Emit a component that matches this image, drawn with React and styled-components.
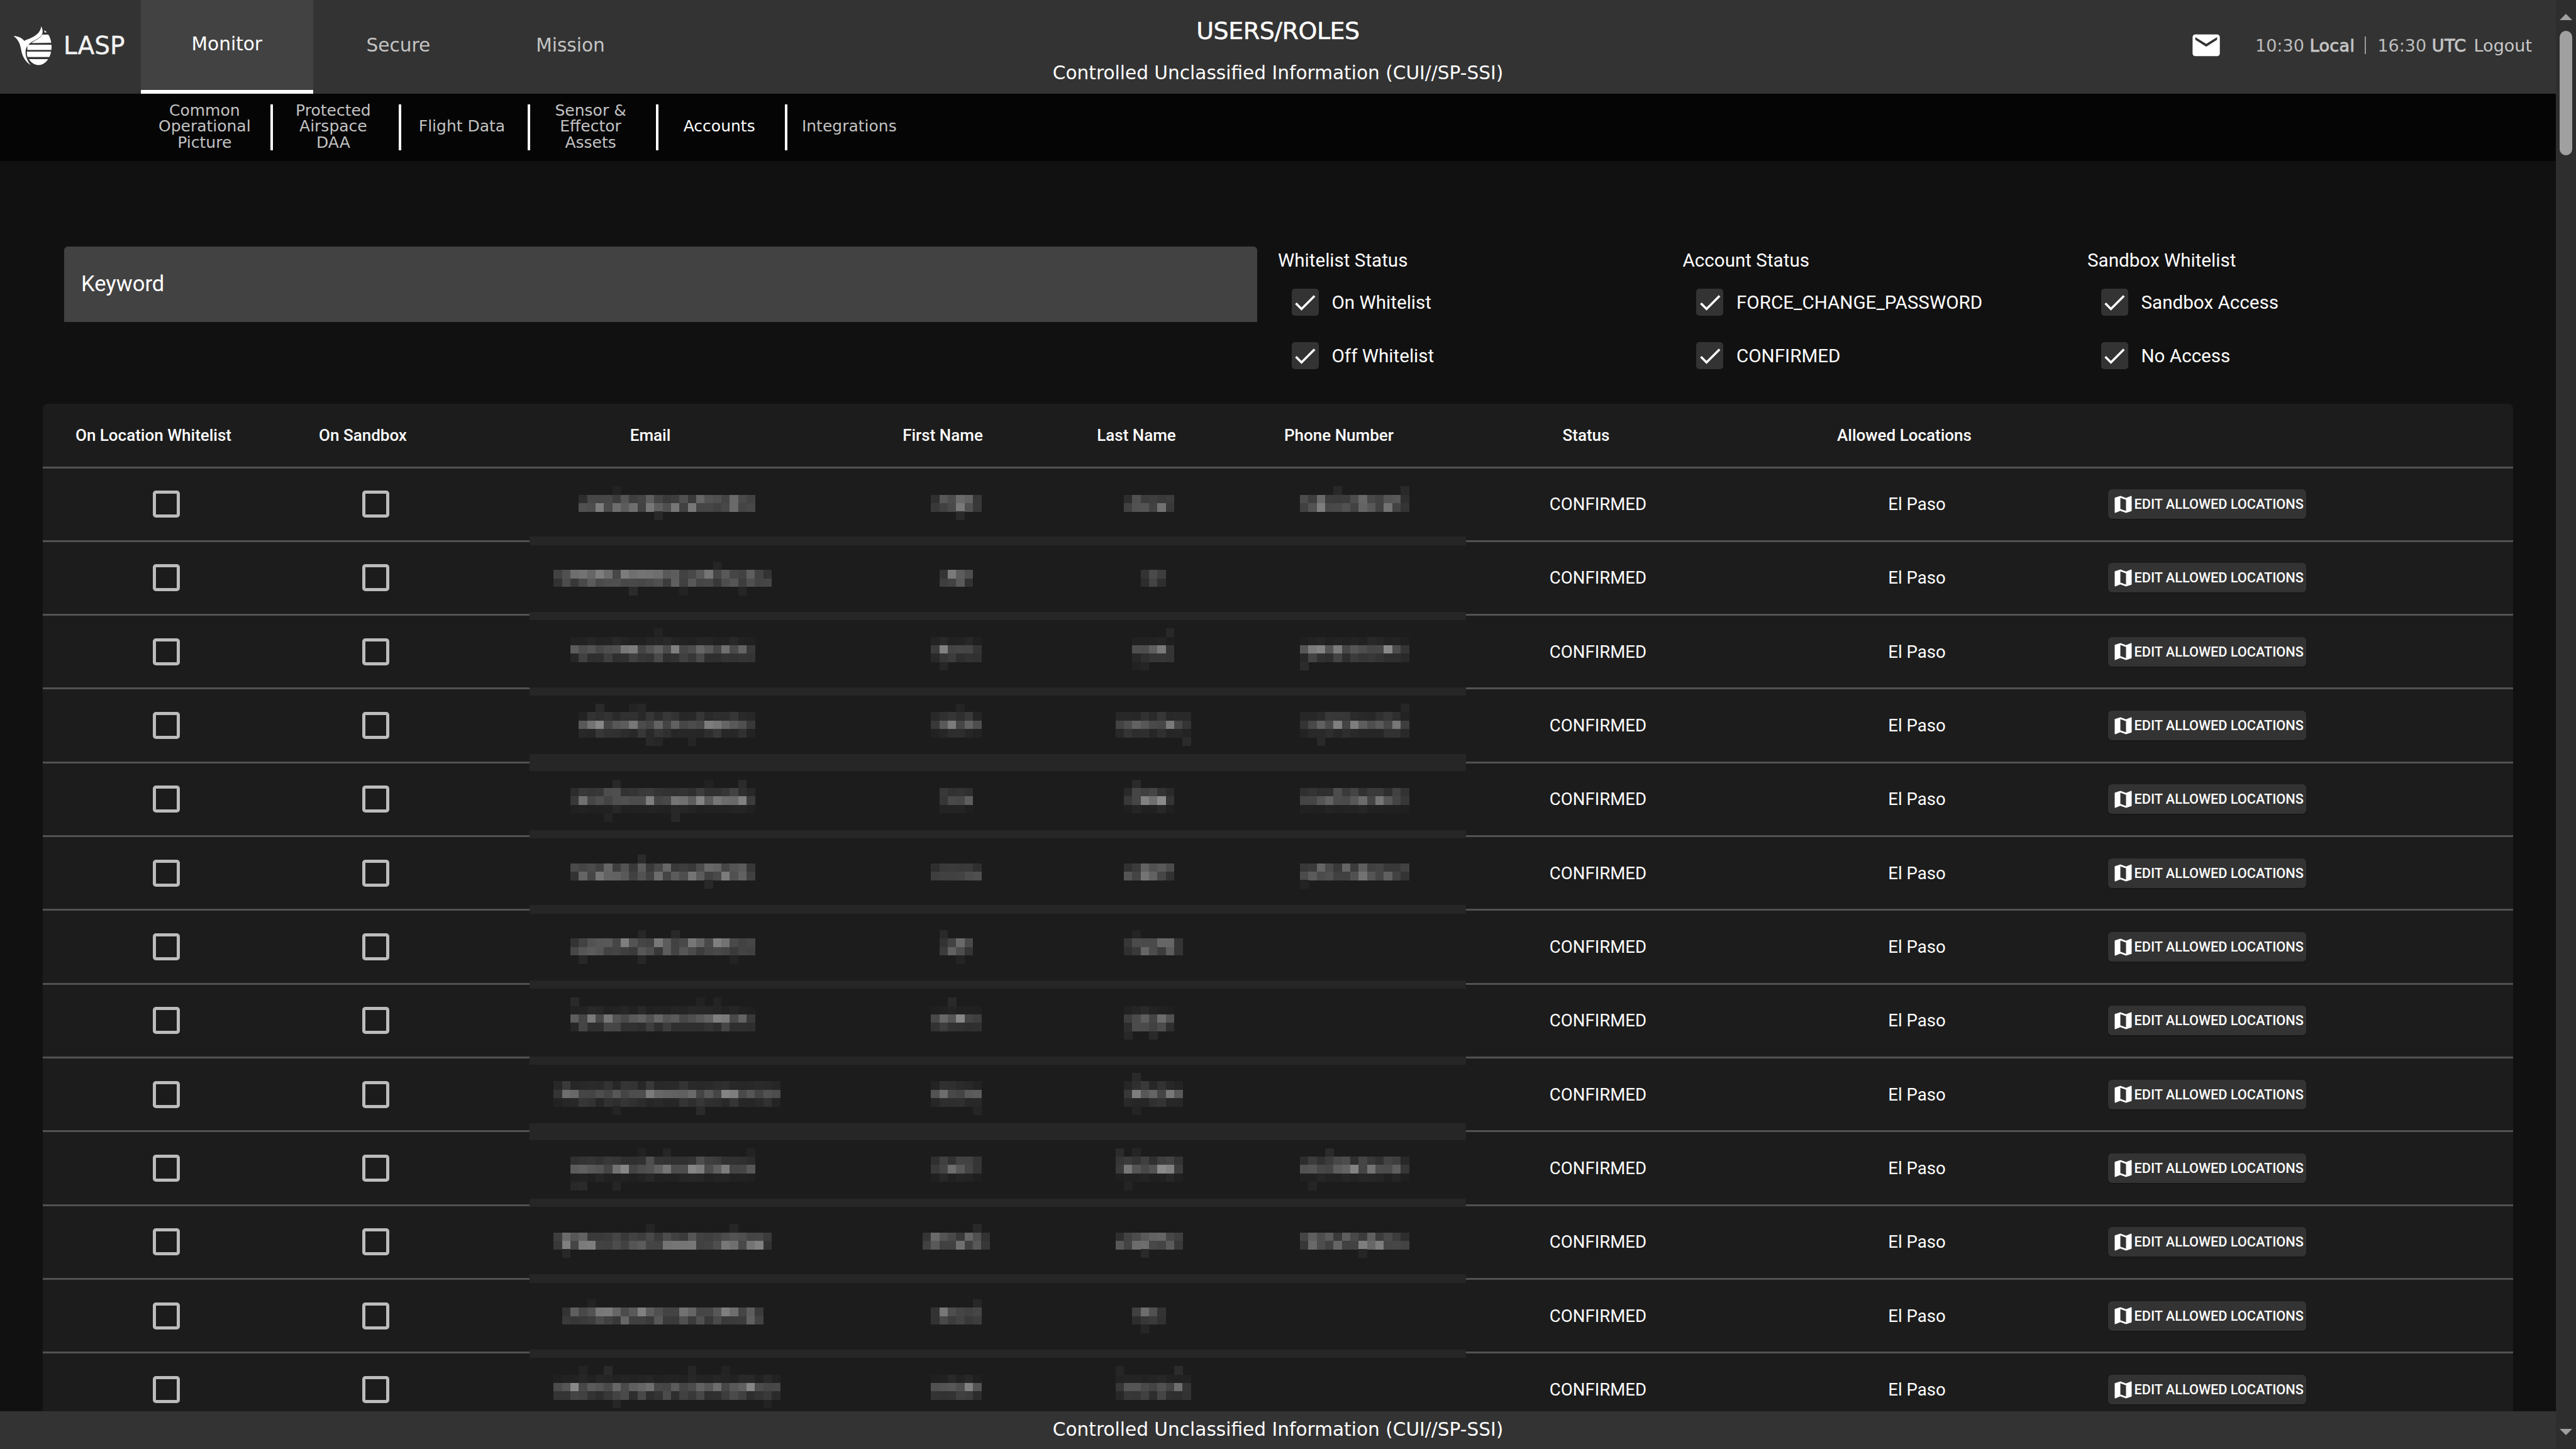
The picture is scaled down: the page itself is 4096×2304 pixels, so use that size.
import React from "react";
import styled, { createGlobalStyle } from "styled-components";

const Global = createGlobalStyle`
  html, body { margin: 0; padding: 0; height: 100%; background: #111; overflow: hidden; }
  #root { height: 100%; }
  * { box-sizing: border-box; }
`;

const Shell = styled.div`display: flex; width: 4096px; height: 2304px; overflow: hidden; background: #111;`;
const Main = styled.div`display: flex; flex-direction: column; width: 4064px; height: 2304px;`;
const Header = styled.header`
  display: grid; grid-template-columns: 1fr auto 1fr; height: 149px; background: #333; flex: none;
  font-family: "DejaVu Sans", sans-serif;
`;
const HeaderLeft = styled.div`display: flex; align-items: stretch;`;
const Brand = styled.div`display: flex; align-items: center; width: 224px; padding: 0 0 4px 21px; gap: 18px; color: #f2f2f2; font-size: 39px; -webkit-text-stroke: 0.4px #f2f2f2;`;
const Logo = styled.svg`width: 62px; height: 63px; flex: none; margin-top: 0;`;
const Tab = styled.div`
  width: 273.6px; display: flex; align-items: center; justify-content: center;
  padding-bottom: ${p => (p.$active ? 4 : 6)}px; padding-right: ${p => (p.$active ? 0 : 2)}px;
  font-size: 29.6px; color: ${p => (p.$active ? "#fff" : "#c4c4c4")};
  background: ${p => (p.$active ? "#424242" : "transparent")};
  border-bottom: ${p => (p.$active ? "6px solid #fff" : "none")};
`;
const TitleStack = styled.div`display: flex; flex-direction: column; align-items: center; color: #fff; padding-top: 26px;`;
const Title = styled.div`font-size: 38px; line-height: 46px; letter-spacing: -0.5px; -webkit-text-stroke: 0.5px #fff;`;
const Cui = styled.div`font-size: 29.6px; line-height: 40px; margin-top: 24px; white-space: nowrap;`;
const HeaderRight = styled.div`display: flex; align-items: center; justify-content: flex-end; padding: 0 38px 5px 0; color: #bdbdbd; font-size: 27px; white-space: nowrap;`;
const MailIcon = styled.svg`width: 52px; height: 52px; fill: #fff; margin-right: 52px; flex: none;`;
const Strong = styled.span`-webkit-text-stroke: 0.9px #c4c4c4; color: #c4c4c4; letter-spacing: 0.4px;`;
const Pipe = styled.span`width: 2px; height: 28px; background: #9a9a9a; margin: 0 18px 0 16px; flex: none;`;
const TimeText = styled.span`display: inline-block;`;
const Logout = styled.span`margin-left: 12px; color: #c8c8c8;`;

const SubNav = styled.nav`
  display: flex; height: 107px; padding: 17px 0 17px 229px; flex: none; background: #050505;
  font-family: "DejaVu Sans", sans-serif;
`;
const SubItem = styled.div`
  width: 204.6px; height: 73px; display: flex; align-items: center; justify-content: center; text-align: center;
  padding: 0 26px 3px 18px;
  font-size: 25px; line-height: 25.6px; color: ${p => (p.$active ? "#fff" : "#c2c2c2")};
  border-right: ${p => (p.$last ? "none" : "4px solid #fff")};
`;

const Content = styled.main`flex: 1; min-height: 0; overflow: hidden; padding-top: 136px; background: #111; font-family: Roboto, sans-serif;`;
const Filters = styled.div`display: flex; padding-left: 102px; height: 250px; gap: 33px; align-items: flex-start;`;
const Keyword = styled.div`
  width: 1897px; height: 120px; background: #424242; border-radius: 6px 6px 0 0; display: flex; align-items: center;
  padding: 0 0 2px 27px; color: #fff; font-size: 34.6px;
`;
const FilterGroup = styled.div`width: 610.5px; color: #fff; font-size: 29.6px;`;
const FilterTitle = styled.div`height: 44px; line-height: 44px;`;
const FilterOption = styled.div`display: flex; align-items: center; height: 43px; margin: 23px 0 42px 21.5px; gap: 21px;`;
const CheckedBox = styled.span`width: 43px; height: 43px; border-radius: 5px; background: #333; display: flex; align-items: center; justify-content: center; flex: none;`;
const CheckIcon = styled.svg`width: 44px; height: 44px; fill: #fff; flex: none;`;

const Table = styled.div`margin: 0 68px; background: #1c1c1c; border-radius: 8px 8px 0 0;`;
const columns = "392px 274px 650px 270px 346px 304px 472px 542px 678px";
const HeadRow = styled.div`
  display: grid; grid-template-columns: ${columns}; height: 102.5px; align-items: center; border-bottom: 3px solid #525252;
`;
const HeadCell = styled.div`text-align: center; padding-right: ${p => p.$pad}px; font-size: 26px; font-weight: 500; color: #fff; white-space: nowrap;`;
const Row = styled.div`
  position: relative; display: grid; grid-template-columns: ${columns}; height: 117.33px; align-items: center;
  border-bottom: 3px solid #525252;
`;
const Cell = styled.div`display: flex; justify-content: center; align-items: center; padding-left: ${p => p.$shift || 0}px; font-size: 27.6px; color: #fff; white-space: nowrap;`;
const ActionCell = styled.div`display: flex; justify-content: flex-start; padding-left: 34px;`;
const EmptyBox = styled.span`width: 43px; height: 43px; border: 5px solid #bcbcbc; border-radius: 5px; display: block;`;
const EditButton = styled.div`
  display: flex; align-items: center; width: 315px; height: 47px; padding-left: 5.5px; background: #333; border-radius: 6px;
  color: #fff; font-size: 21.7px; font-weight: 500; white-space: nowrap; box-shadow: 0 1px 2px rgba(0,0,0,.35);
`;
const MapIcon = styled.svg`width: 36px; height: 36px; fill: #fff; flex: none; margin-right: 0;`;
const Mask = styled.svg`position: absolute; left: 772px; top: 0; width: 1493px; height: 117px; overflow: visible; shape-rendering: crispEdges;`;

const Footer = styled.footer`
  height: 60px; flex: none; display: flex; align-items: center; justify-content: center; background: #333; color: #fff;
  font-family: "DejaVu Sans", sans-serif; font-size: 29.6px; padding-bottom: 2px;
`;

const Track = styled.div`
  width: 32px; height: 2304px; flex: none; background: #2e2e2e; display: flex; flex-direction: column; align-items: center;
  padding: 22px 0; 
`;
const ArrowUp = styled.span`width: 0; height: 0; border: 10px solid transparent; border-top: 0; border-bottom: 10px solid #a0a0a0; flex: none;`;
const ArrowDown = styled.span`width: 0; height: 0; border: 10px solid transparent; border-bottom: 0; border-top: 10px solid #a0a0a0; flex: none;`;
const Thumb = styled.div`width: 20px; height: 198px; margin-top: 17px; border-radius: 10px; background: #a0a0a0; flex: none;`;
const Spacer = styled.div`flex: 1;`;

const P = 4096 / 1568;
const rowsData = [
  [[351,460],[566,597],[684,715],[790,858]],
  [[338,470],[572,592],[694,710],null],
  [[347,460],[566,597],[689,714],[790,858]],
  [[351,460],[566,597],[679,725],[790,858]],
  [[347,460],[572,592],[684,714],[790,858]],
  [[347,460],[566,597],[684,714],[790,858]],
  [[347,460],[572,592],[684,720],null],
  [[347,460],[566,597],[684,714],null],
  [[336,474],[566,597],[684,718],null],
  [[347,460],[566,597],[679,720],[790,858]],
  [[337,470],[561,602],[679,722],[790,858]],
  [[342,465],[566,597],[688,712],null],
  [[336,474],[566,597],[679,725],null],
];

function rng(seed) {
  let a = seed >>> 0;
  return () => {
    a = (a + 0x6d2b79f5) >>> 0;
    let t = a;
    t = Math.imul(t ^ (t >>> 15), t | 1);
    t ^= t + Math.imul(t ^ (t >>> 7), t | 61);
    return ((t ^ (t >>> 14)) >>> 0) / 4294967296;
  };
}

const CELL = 40 / 3;
const GX = 840.33, GY = 786;
const ROW0 = 744.5, RH = 117.33;

function MaskRow({ index, spans }) {
  const top = ROW0 + RH * index;
  const c = 802 + RH * index;
  const line = ROW0 + RH * (index + 1) - 1.5;
  const rects = [];
  const rand = rng(1234 + index * 97);
  const k0 = Math.floor((top - GY) / CELL);
  for (let k = k0; k < k0 + 11; k++) {
    const y0 = GY + k * CELL, y1 = y0 + CELL;
    if (y0 < line + 1.5 && y1 > line - 1.5) {
      rects.push(<rect key={"b" + k} x={2} y={y0 - top} width={1489} height={CELL} fill="#262626" />);
    }
    const ov = Math.max(0, Math.min(y1, c + 9) - Math.max(y0, c - 12)) / CELL;
    const desc = y0 >= c + 6 && y0 < c + 22;
    const asc = y1 <= c - 8 && y1 > c - 24;
    if (ov <= 0.05 && !desc && !asc) continue;
    spans.forEach((span, si) => {
      if (!span) return;
      const a = Math.round((span[0] * P - GX) / CELL);
      const b = Math.round((span[1] * P - GX) / CELL);
      for (let j = a; j < b; j++) {
        const r = rand();
        let v;
        if (ov > 0.05) {
          const edge = j === a || j === b - 1 ? 0.6 : 1;
          v = 28 + (0.35 + Math.min(1, ov) * 0.65) * Math.min(1, ov + 0.2) * (40 + r * r * 70) * edge;
        } else {
          if (r > 0.07) continue;
          v = 34 + rand() * 10;
        }
        const h = Math.round(v);
        rects.push(<rect key={k + "-" + si + "-" + j} x={j * CELL + GX - 840} y={y0 - top} width={CELL + 0.4} height={CELL + 0.4} fill={`rgb(${h},${h},${h})`} />);
      }
    });
  }
  return <Mask aria-hidden="true">{rects}</Mask>;
}

const mapPath = "M20.5 3l-.16.03L15 5.1 9 3 3.36 4.9c-.21.07-.36.25-.36.48V20.5c0 .28.22.5.5.5l.16-.03L9 18.9l6 2.1 5.64-1.9c.21-.07.36-.25.36-.48V3.5c0-.28-.22-.5-.5-.5zM15 19l-6-2.11V5l6 2.11V19z";
const checkPath = "M9 16.17L4.83 12l-1.42 1.41L9 19 21 7l-1.41-1.41z";

const LogoMark = () => (
  <Logo viewBox="62 122 188 190" aria-label="LASP logo">
    <defs>
      <clipPath id="body"><ellipse cx="184" cy="222" rx="63" ry="89" /></clipPath>
    </defs>
    <path fill="#fff" d="M64 171 C82 171 100 177 116 194 C130 186 165 178 184 155 C192 145 196 135 197 124 C204 138 207 150 200 165 C190 184 160 192 140 208 C124 221 120 240 122 258 C124 276 134 296 146 311 C128 300 112 280 104 254 C98 232 98 196 64 171 Z" />
    <g clipPath="url(#body)" fill="#fff">
      <path d="M208 128 L250 128 L250 153 L212 153 C214 145 212 136 208 128 Z" />
      <path d="M150 205 C168 190 192 184 202 164 L250 164 L250 203 Z" />
      <rect x="130" y="213" width="130" height="25" />
      <rect x="128" y="246" width="130" height="26" />
      <path d="M130 282 L250 282 L250 320 L146 320 C138 308 134 295 130 282 Z" />
    </g>
  </Logo>
);

const FilterChoice = ({ label }) => (
  <FilterOption>
    <CheckedBox><CheckIcon viewBox="0 0 24 24"><path d={checkPath} /></CheckIcon></CheckedBox>
    {label}
  </FilterOption>
);

const filters = [
  ["Whitelist Status", ["On Whitelist", "Off Whitelist"]],
  ["Account Status", ["FORCE_CHANGE_PASSWORD", "CONFIRMED"]],
  ["Sandbox Whitelist", ["Sandbox Access", "No Access"]],
];
const heads = [
  ["On Location Whitelist", 40], ["On Sandbox", 40], ["Email", 50], ["First Name", 40], ["Last Name", 40],
  ["Phone Number", 46], ["Status", 36], ["Allowed Locations", 38], ["", 0],
];
const subs = [
  ["Common Operational Picture"], ["Protected Airspace DAA"], ["Flight Data"], ["Sensor & Effector Assets"], ["Accounts", true], ["Integrations"],
];

export default function App() {
  return (
    <Shell>
      <Global />
      <Main>
        <Header>
          <HeaderLeft>
            <Brand><LogoMark />LASP</Brand>
            <Tab $active>Monitor</Tab>
            <Tab>Secure</Tab>
            <Tab>Mission</Tab>
          </HeaderLeft>
          <TitleStack>
            <Title>USERS/ROLES</Title>
            <Cui>Controlled Unclassified Information (CUI//SP-SSI)</Cui>
          </TitleStack>
          <HeaderRight>
            <MailIcon viewBox="0 0 24 24"><path d="M20 4H4c-1.1 0-1.99.9-1.99 2L2 18c0 1.1.9 2 2 2h16c1.1 0 2-.9 2-2V6c0-1.1-.9-2-2-2zm0 4l-8 5-8-5V6l8 5 8-5v2z" /></MailIcon>
            <TimeText>10:30 <Strong>Local</Strong></TimeText>
            <Pipe />
            <TimeText>16:30 <Strong>UTC</Strong></TimeText>
            <Logout>Logout</Logout>
          </HeaderRight>
        </Header>
        <SubNav>
          {subs.map(([label, active], i) => (
            <SubItem key={label} $active={active} $last={i === subs.length - 1}>{label}</SubItem>
          ))}
        </SubNav>
        <Content>
          <Filters>
            <Keyword>Keyword</Keyword>
            {filters.map(([title, opts]) => (
              <FilterGroup key={title}>
                <FilterTitle>{title}</FilterTitle>
                {opts.map(o => <FilterChoice key={o} label={o} />)}
              </FilterGroup>
            ))}
          </Filters>
          <Table>
            <HeadRow>
              {heads.map(([h, pad], i) => <HeadCell key={i} $pad={pad}>{h}</HeadCell>)}
            </HeadRow>
            {rowsData.map((spans, i) => (
              <Row key={i}>
                <Cell><EmptyBox /></Cell>
                <Cell><EmptyBox /></Cell>
                <Cell /><Cell /><Cell /><Cell />
                <Cell $shift={2}>CONFIRMED</Cell>
                <Cell $shift={2}>El Paso</Cell>
                <ActionCell>
                  <EditButton>
                    <MapIcon viewBox="0 0 24 24"><path d={mapPath} /></MapIcon>
                    EDIT ALLOWED LOCATIONS
                  </EditButton>
                </ActionCell>
                <MaskRow index={i} spans={spans} />
              </Row>
            ))}
          </Table>
        </Content>
        <Footer>Controlled Unclassified Information (CUI//SP-SSI)</Footer>
      </Main>
      <Track>
        <ArrowUp />
        <Thumb />
        <Spacer />
        <ArrowDown />
      </Track>
    </Shell>
  );
}
